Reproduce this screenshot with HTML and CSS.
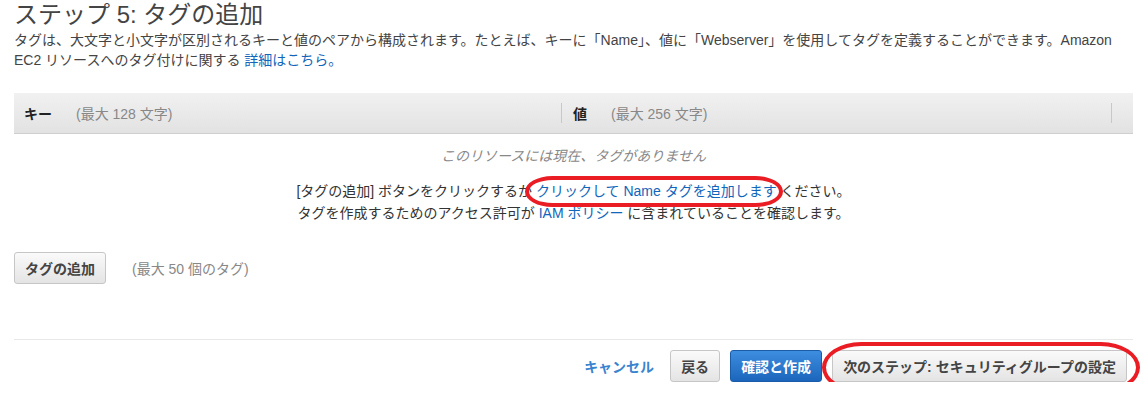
FILE: index.html
```html
<!DOCTYPE html>
<html lang="ja">
<head>
    <meta charset="UTF-8">
    <meta name="viewport" content="width=device-width, initial-scale=1.0">
    <title>ステップ 5: タグの追加</title>
    <link rel="stylesheet" href="styles.css">
</head>
<body>

    <div class="page">
        <h1 class="title">ステップ 5: タグの追加</h1>
        <p class="intro">
            タグは、大文字と小文字が区別されるキーと値のペアから構成されます。たとえば、キーに「Name」、値に「Webserver」を使用してタグを定義することができます。Amazon
            EC2 リソースへのタグ付けに関する <a href="#">詳細はこちら。</a>
        </p>

        <div class="tag-table">
            <div class="tag-head">
                <div class="col col-key"><b>キー</b><span class="hint">(最大 128 文字)</span></div>
                <div class="col col-value"><b>値</b><span class="hint">(最大 256 文字)</span></div>
                <div class="col col-end"></div>
            </div>
            <div class="tag-empty">
                <p class="empty-msg">このリソースには現在、タグがありません</p>
                <p class="empty-help">
                    [タグの追加] ボタンをクリックするか <span class="marked"><a href="#">クリックして Name タグを追加します</a></span> ください。<br>
                    タグを作成するためのアクセス許可が <a href="#">IAM ポリシー</a> に含まれていることを確認します。
                </p>
            </div>
        </div>

        <div class="add-row">
            <button class="btn">タグの追加</button>
            <span class="hint">(最大 50 個のタグ)</span>
        </div>

        <div class="actions">
            <a href="#" class="cancel">キャンセル</a>
            <button class="btn">戻る</button>
            <button class="btn btn-primary">確認と作成</button>
            <span class="marked marked-btn"><button class="btn">次のステップ: セキュリティグループの設定</button></span>
        </div>
    </div>

</body>
</html>
```

FILE: styles.css
```css
body {
    margin: 0;
    padding: 0;
    background-color: #fff;
    font-family: "Liberation Sans", Arial, "Noto Sans CJK JP", sans-serif;
    font-size: 14px;
    color: #444;
}

.page {
    padding: 0 12px 0 14px;
}

a {
    color: #1166bb;
    text-decoration: none;
}

.title {
    margin: 0;
    font-size: 24px;
    font-weight: normal;
    line-height: 30px;
    color: #444;
}

.intro {
    margin: 0;
    line-height: 20px;
}

.tag-table {
    margin-top: 23px;
}

.tag-head {
    display: flex;
    height: 40px;
    align-items: center;
    background: linear-gradient(#f1f1f1, #e2e2e2);
    border-bottom: 1px solid #cfcfcf;
}

.col {
    display: flex;
    align-items: center;
    height: 20px;
}

.col b {
    color: #222;
    margin-right: 24px;
}

.col-key {
    width: 537px;
    padding-left: 10px;
}

.col-value {
    flex: 1;
    padding-left: 11px;
    border-left: 1px solid #c8c8c8;
}

.col-end {
    width: 21px;
    border-left: 1px solid #c8c8c8;
}

.hint {
    color: #888;
}

.tag-empty {
    text-align: center;
}

.empty-msg {
    margin: 12px 0 0;
    font-style: italic;
    color: #888;
    line-height: 20px;
}

.empty-help {
    margin: 14px 0 0;
    line-height: 22px;
    color: #333;
}

.marked {
    position: relative;
}

.marked::after {
    content: "";
    position: absolute;
    left: -11px;
    right: -6px;
    top: -7px;
    bottom: -8px;
    border: 4px solid #ea1c24;
    border-radius: 32px / 18px;
}

.add-row {
    display: flex;
    align-items: center;
    gap: 26px;
    margin-top: 28px;
}

.btn {
    font-family: inherit;
    font-size: 14px;
    font-weight: bold;
    color: #444;
    height: 32px;
    padding: 0 10px;
    background: linear-gradient(#fafafa, #e4e4e4);
    border: 1px solid #c6c6c6;
    border-radius: 3px;
}

.btn-primary {
    color: #fff;
    background: linear-gradient(#3d8de0, #1b66bc);
    border-color: #1a5ca8;
}

.actions {
    display: flex;
    align-items: center;
    justify-content: flex-end;
    gap: 10px;
    margin-top: 55px;
    padding: 10px 6px 0 0;
    border-top: 1px solid #e8e8e8;
}

.cancel {
    font-weight: bold;
    color: #3a84cf;
    margin-right: 6px;
}

.marked-btn::after {
    left: -10px;
    right: -13px;
    top: -8px;
    bottom: -11px;
    border-radius: 40px / 26px;
}

.marked-btn .btn {
    display: block;
}
```
